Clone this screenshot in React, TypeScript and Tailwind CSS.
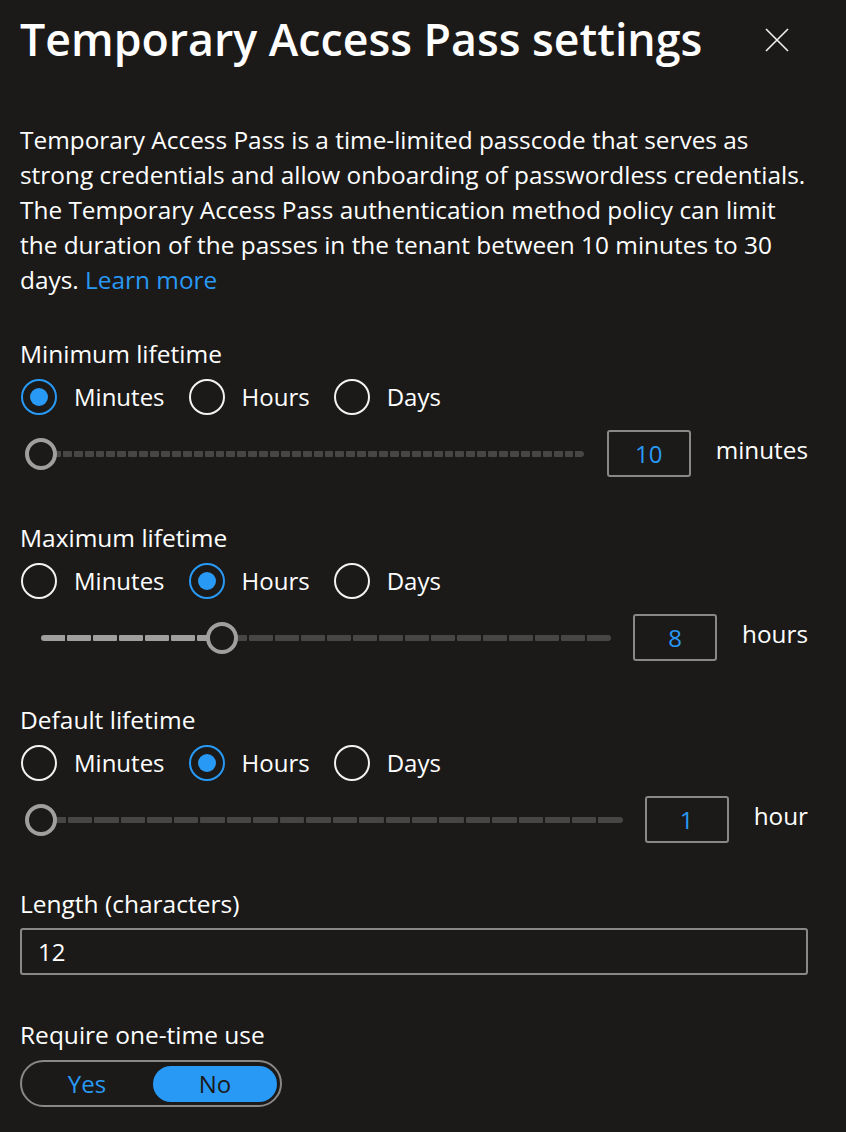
import React from "react";

const FONT = { fontFamily: '"Open Sans", "Noto Sans", sans-serif' };

function Radio({ label, checked }: { label: string; checked?: boolean }) {
  return (
    <div className="flex items-center">
      <div
        className={
          "w-[36px] h-[36px] rounded-full border-2 flex items-center justify-center " +
          (checked ? "border-[#2899f5]" : "border-[#f3f2f1]")
        }
      >
        {checked && <div className="w-[18px] h-[18px] rounded-full bg-[#2899f5]" />}
      </div>
      <span className="ml-[17px] text-[24px] leading-[32px] text-white">{label}</span>
    </div>
  );
}

function RadioRow({ selected }: { selected: number }) {
  const items = ["Minutes", "Hours", "Days"];
  return (
    <div className="flex items-center gap-[24px] ml-[1px] h-[36px]">
      {items.map((t, i) => (
        <Radio key={t} label={t} checked={i === selected} />
      ))}
    </div>
  );
}

function Slider({
  segments,
  filled,
  value,
  unit,
}: {
  segments: number;
  filled: number;
  value: string;
  unit: string;
}) {
  const pct = (filled / segments) * 100;
  return (
    <div className="flex items-center h-[47px]">
      <div className="flex-1 ml-[21px] relative h-[32px] flex items-center">
        <div className="flex w-full gap-[2px] h-[6px]">
          {Array.from({ length: segments }).map((_, i) => (
            <div
              key={i}
              className={
                "flex-1 h-full rounded-[1px] " +
                (i < filled ? "bg-[#a19f9d] " : "bg-[#484644] ") +
                (i === 0 ? "rounded-l-full " : "") +
                (i === segments - 1 ? "rounded-r-full" : "")
              }
            />
          ))}
        </div>
        <div
          className="absolute top-0 w-[32px] h-[32px] -translate-x-1/2 rounded-full border-[4px] border-[#a19f9d] bg-[#1b1a19]"
          style={{ left: `${pct}%` }}
        />
      </div>
      <div className="ml-[22px] w-[84px] h-[47px] border-2 border-[#8a8886] rounded-[3px] flex items-center justify-center text-[24px] text-[#2899f5]">
        {value}
      </div>
      <span className="ml-[25px] text-[24.3px] leading-[32px] text-white -mt-[8px]">{unit}</span>
    </div>
  );
}

export default function App() {
  return (
    <div
      className="w-[846px] h-[1132px] bg-[#1b1a19] text-white pl-[20px] pr-[38px] overflow-hidden"
      style={FONT}
    >
      <div className="flex items-center justify-between h-[80px]">
        <h1 className="text-[44.7px] font-semibold leading-none text-white whitespace-nowrap -mt-[1px]">
          Temporary Access Pass settings
        </h1>
        <svg width="24" height="24" viewBox="0 0 24 24" className="mr-[19px]">
          <path d="M1 1 L23 23 M23 1 L1 23" stroke="#f3f2f1" strokeWidth="1.6" fill="none" />
        </svg>
      </div>

      <p className="mt-[42px] text-[24.4px] leading-[35px] whitespace-nowrap">
        Temporary Access Pass is a time-limited passcode that serves as
        <br />
        strong credentials and allow onboarding of passwordless credentials.
        <br />
        The Temporary Access Pass authentication method policy can limit
        <br />
        the duration of the passes in the tenant between 10 minutes to 30
        <br />
        days. <span className="text-[#2899f5]">Learn more</span>
      </p>

      <div className="mt-[41px] text-[24.5px] leading-[32px]">Minimum lifetime</div>
      <div className="mt-[9px]">
        <RadioRow selected={0} />
      </div>
      <div className="mt-[15px]">
        <Slider segments={50} filled={0} value="10" unit="minutes" />
      </div>

      <div className="mt-[45px] text-[24.5px] leading-[32px]">Maximum lifetime</div>
      <div className="mt-[9px]">
        <RadioRow selected={1} />
      </div>
      <div className="mt-[15px]">
        <Slider segments={22} filled={7} value="8" unit="hours" />
      </div>

      <div className="mt-[43px] text-[24.5px] leading-[32px]">Default lifetime</div>
      <div className="mt-[9px]">
        <RadioRow selected={1} />
      </div>
      <div className="mt-[15px]">
        <Slider segments={22} filled={0} value="1" unit="hour" />
      </div>

      <div className="mt-[45px] text-[24.5px] leading-[32px]">Length (characters)</div>
      <div className="mt-[8px] h-[47px] border-2 border-[#8a8886] rounded-[3px] flex items-center pl-[16px] text-[24px] text-white">
        12
      </div>

      <div className="mt-[44px] text-[24.5px] leading-[32px]">Require one-time use</div>
      <div className="mt-[9px] w-[262px] h-[47px] border-2 border-[#8a8886] rounded-full flex items-center pl-[3px] gap-[4px]">
        <div className="w-[124px] h-[36px] rounded-full flex items-center justify-center text-[24px] text-[#2899f5]">
          Yes
        </div>
        <div className="w-[124px] h-[36px] rounded-full bg-[#2899f5] flex items-center justify-center text-[24px] text-[#1b1a19]">
          No
        </div>
      </div>
    </div>
  );
}
